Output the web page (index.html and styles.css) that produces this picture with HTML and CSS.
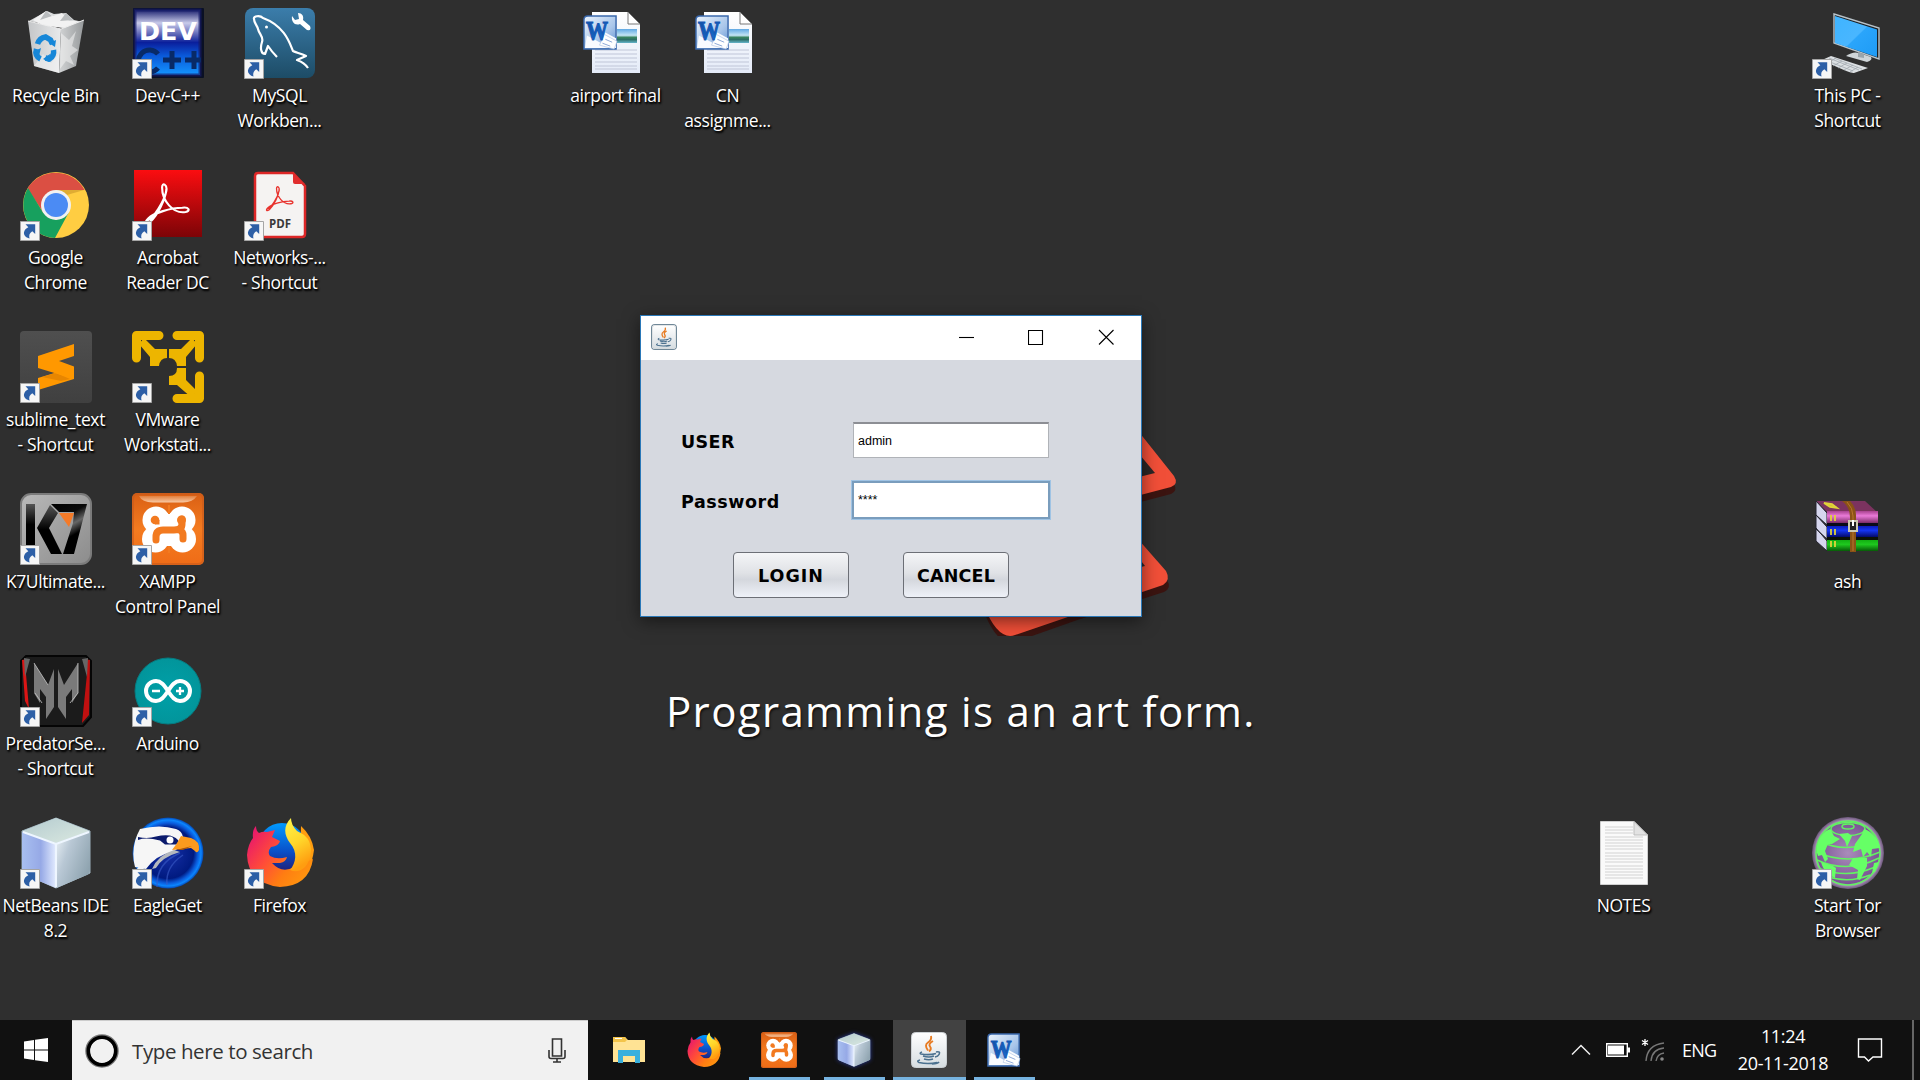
FILE: index.html
```html
<!DOCTYPE html>
<html lang="en">
<head>
<meta charset="utf-8">
<title>Desktop</title>
<link rel="stylesheet" href="styles.css">
</head>
<body>
<svg class="defs" aria-hidden="true">
  <defs>
    <linearGradient id="gDev" x2="0" y2="1"><stop offset="0" stop-color="#1d2270"/><stop offset=".2" stop-color="#c9cbea"/><stop offset=".38" stop-color="#5a62b5"/><stop offset=".5" stop-color="#0a1f9c"/><stop offset=".7" stop-color="#0a58d8"/><stop offset="1" stop-color="#1495ff"/></linearGradient>
    <linearGradient id="gSql" x2="0" y2="1"><stop offset="0" stop-color="#3b7dab"/><stop offset="1" stop-color="#1d4c66"/></linearGradient>
    <linearGradient id="gAcr" x2="0" y2="1"><stop offset="0" stop-color="#fb0d10"/><stop offset="1" stop-color="#7c0407"/></linearGradient>
    <linearGradient id="gSub" x2="0" y2="1"><stop offset="0" stop-color="#4f4f4f"/><stop offset="1" stop-color="#404040"/></linearGradient>
    <linearGradient id="gK7" x2="1" y2="1"><stop offset="0" stop-color="#b9b9b9"/><stop offset=".5" stop-color="#a2a2a2"/><stop offset="1" stop-color="#8c8c8c"/></linearGradient>
    <linearGradient id="gK7b" x2="0" y2="1"><stop offset="0" stop-color="#555"/><stop offset=".5" stop-color="#000"/></linearGradient>
    <linearGradient id="gK7c" x2=".4" y2="1"><stop offset="0" stop-color="#000"/><stop offset=".35" stop-color="#0a0a0a"/><stop offset=".55" stop-color="#666"/><stop offset=".75" stop-color="#000"/></linearGradient>
    <linearGradient id="gXam" x2="0" y2="1"><stop offset="0" stop-color="#d95f14"/><stop offset=".5" stop-color="#f47b20"/><stop offset="1" stop-color="#ef6c17"/></linearGradient>
    <linearGradient id="gGloss" x2="0" y2="1"><stop offset="0" stop-color="#e2803f"/><stop offset="1" stop-color="#f8c9a4"/></linearGradient>
    <radialGradient id="gArd"><stop offset="0" stop-color="#00a0a8"/><stop offset="1" stop-color="#02959b"/></radialGradient>
    <linearGradient id="gCubeL" x2="1" y2="0"><stop offset="0" stop-color="#a8bff0"/><stop offset=".55" stop-color="#96a9e6"/><stop offset="1" stop-color="#e3ecff"/></linearGradient>
    <linearGradient id="gCubeR" x2="1" y2=".6"><stop offset="0" stop-color="#edf4f8"/><stop offset=".4" stop-color="#b9c8d5"/><stop offset="1" stop-color="#8fa4b0"/></linearGradient>
    <linearGradient id="gCubeT" x2="1" y2="1"><stop offset="0" stop-color="#b4cbd0"/><stop offset="1" stop-color="#dbe9e0"/></linearGradient>
    <radialGradient id="gEag"><stop offset="0" stop-color="#1730a8"/><stop offset=".72" stop-color="#001a80"/><stop offset=".84" stop-color="#0a58d8"/><stop offset=".93" stop-color="#0b86ff"/><stop offset="1" stop-color="#0546b0"/></radialGradient>
    <linearGradient id="gFoxL" x1="1" y1=".9" x2="0" y2=".2"><stop offset="0" stop-color="#ff9d0c"/><stop offset=".35" stop-color="#ff7d12"/><stop offset=".65" stop-color="#ff4a3a"/><stop offset="1" stop-color="#e8186c"/></linearGradient>
    <linearGradient id="gFoxY" x2=".3" y2="1"><stop offset="0" stop-color="#fff44a"/><stop offset=".55" stop-color="#ffd52a"/><stop offset="1" stop-color="#ff9d10"/></linearGradient>
    <linearGradient id="gFoxG" x2="0" y2="1"><stop offset="0" stop-color="#009aff"/><stop offset=".6" stop-color="#0a4fc8"/><stop offset="1" stop-color="#20207a"/></linearGradient>
    <linearGradient id="gPage" x2="0" y2="1"><stop offset="0" stop-color="#fff"/><stop offset="1" stop-color="#e4ebf8"/></linearGradient>
    <linearGradient id="gW" x2="1" y2="1"><stop offset="0" stop-color="#eaf3fd"/><stop offset=".6" stop-color="#a9c6ea"/><stop offset="1" stop-color="#5b8dcf"/></linearGradient>
    <linearGradient id="gWl" x2="1" y2="1"><stop offset="0" stop-color="#0f4a9e"/><stop offset="1" stop-color="#1c74d8"/></linearGradient>
    <linearGradient id="gSky" x2="0" y2="1"><stop offset="0" stop-color="#5fa8e4"/><stop offset=".45" stop-color="#c3e4f4"/><stop offset=".6" stop-color="#3a8560"/><stop offset=".75" stop-color="#2c6f66"/><stop offset="1" stop-color="#66b5cc"/></linearGradient>
    <linearGradient id="gScr" x2="1" y2="1"><stop offset="0" stop-color="#3fb4ff"/><stop offset=".5" stop-color="#49b6ff"/><stop offset=".52" stop-color="#2aa5fb"/><stop offset="1" stop-color="#1e9bf5"/></linearGradient>
    <radialGradient id="gTor"><stop offset="0" stop-color="#a98cba"/><stop offset=".85" stop-color="#7c5595"/><stop offset=".9" stop-color="#a990b8"/><stop offset="1" stop-color="#6a5578"/></radialGradient>
    <linearGradient id="gPink" x2="0" y2="1"><stop offset="0" stop-color="#a8428f"/><stop offset=".4" stop-color="#ea7ad8"/><stop offset="1" stop-color="#7b2c68"/></linearGradient>
    <linearGradient id="gBlue" x2="0" y2="1"><stop offset="0" stop-color="#0c1cba"/><stop offset=".4" stop-color="#1535f2"/><stop offset="1" stop-color="#040a6a"/></linearGradient>
    <linearGradient id="gGreen" x2="0" y2="1"><stop offset="0" stop-color="#12b012"/><stop offset=".4" stop-color="#1fc81f"/><stop offset="1" stop-color="#075a07"/></linearGradient>
    <linearGradient id="gJava" x2="0" y2="1"><stop offset="0" stop-color="#fff"/><stop offset="1" stop-color="#d6dde1"/></linearGradient>
    <linearGradient id="gBinL" x2="1" y2="0"><stop offset="0" stop-color="#c4c6c8"/><stop offset="1" stop-color="#e9eaeb"/></linearGradient>
    <linearGradient id="gBinR" x2="1" y2="0"><stop offset="0" stop-color="#d2d4d5"/><stop offset="1" stop-color="#96999b"/></linearGradient>
  </defs>

  <symbol id="arrow" viewBox="0 0 20 20">
    <path d="M.5.5h19v19H.5z" fill="#f6f6f6" stroke="#a5a5a5"/>
    <path d="M5.500 3.200H15.200V13L12.300 10.300C9.500 12 8.700 14.300 9.500 17.600C5.800 16.600 3.500 14.200 4 11.300C4.400 9 6 7.200 8.300 6.200Z" fill="#2d5fa6"/>
  </symbol>

  <symbol id="bin" viewBox="0 0 72 72">
    <path d="M9 14 27 4l7 3 12-1 8 7 9 2-16 7z" fill="#d8dadb"/>
    <path d="m13 13 13-9 7 5 9-3 7 8 9 0-9 7-25-2z" fill="#f2f2f2"/>
    <path d="m26 4-6 9 12-4zM46 6l-6 8 13-1z" fill="#b9bcbe"/>
    <path d="m8 14 33 8-2 44-25-7z" fill="url(#gBinL)"/>
    <path d="m41 22 23-9-8 46-17 7z" fill="url(#gBinR)"/>
    <path d="m14 59 9-12 8 9 8-9v19zM41 26l8 7 7-9-4 15 6 4-8 6 4 9-8-4-6 8z" fill="#f4f4f4" opacity=".55"/>
    <path d="m8 14 33 8 23-9" fill="none" stroke="#eee" stroke-width="1"/>
    <path d="M18 37q2-6 8-7l5 3 2 4M34 43q1 6-4 9l-4-1M21 52q-6-3-4-10" transform="translate(-.5 0)" fill="none" stroke="#1787d8" stroke-width="5.500"/>
    <path d="m29 36 6 4 1-7zM29 55l1-8-7 5zM13 45l8-4-2 8z" fill="#1787d8"/>
  </symbol>

  <symbol id="dev" viewBox="0 0 72 72">
    <rect x="1" y="1" width="71" height="70" rx="1" fill="#0a1024"/>
    <rect x="3" y="3" width="65" height="65" fill="url(#gDev)"/>
    <path d="M3 3h65v65H3z" fill="none" stroke="#161b66" stroke-width="3" opacity=".7"/>
    <path d="M26 47A11 11 0 1 0 26 61M40 44v18M31 53h18M62 44v18M53 53h16" fill="none" stroke="#082a68" stroke-width="5"/>
  </symbol>

  <symbol id="mysql" viewBox="0 0 72 72">
    <rect x="1" y="1" width="70" height="70" rx="8" fill="url(#gSql)"/>
    <path d="M64 61C60 55 56 54 53 53L62 49C57 46 52 46 49 44C46 37 41 19 19 11C16 8 9 9 10 12C10 16 13 18 14 22C15 27 20 30 18 35C16 41 17 47 21 47L24 39C26 42 29 46 33 50" fill="none" stroke="#fff" stroke-width="2.200" stroke-linejoin="round"/>
    <circle cx="22.500" cy="20" r="1.500" fill="#fff"/>
    <path d="m54 6 1 6-4 1-3-4c-1 6 3 10 8 8l7 6q5 1 3-4l-7-6c1-4-1-7-5-7z" fill="#fff"/>
  </symbol>

  <symbol id="chrome" viewBox="0 0 72 72">
    <circle cx="36" cy="36" r="33" fill="#ffcd42"/>
    <path d="M7.400 19.500A33 33 0 0 1 64.600 21H36L23 43z" fill="#db4f43"/>
    <path d="M8 19A33 33 0 0 0 35 69L49 43 36 51 23 43.500z" fill="#17a05e"/>
    <path d="M36 21h28l-17 5z" fill="#c9962a" opacity=".6"/>
    <circle cx="36" cy="36" r="15" fill="#f1f1f1"/><circle cx="36" cy="36" r="12" fill="#4b8bf4"/>
  </symbol>

  <symbol id="acrobatMark" viewBox="0 0 44 44">
    <path d="M2 38C8 36 18 20 20 10c1-6-4-8-4-3 0 12 10 25 22 23 5-1 3-5-3-4C24 26 8 31 3 36c-4 4-2 6 2 3C12 33 19 18 20 9" fill="none" stroke="currentColor" stroke-width="2" stroke-linejoin="round"/>
  </symbol>
  <symbol id="acrobat" viewBox="0 0 72 72">
    <rect x="2" y="1" width="68" height="67" fill="url(#gAcr)"/>
    <svg x="13" y="11" width="47" height="47" color="#fff"><use href="#acrobatMark"/></svg>
  </symbol>
  <symbol id="pdf" viewBox="0 0 72 72">
    <path d="M14 4h35l12 13v48q0 3-3 3H14q-3 0-3-3V7q0-3 3-3z" fill="#f5f3f2" stroke="#dd2727" stroke-width="2.500"/>
    <path d="M49 4v9q0 2 2 2h10z" fill="#e02d2d"/>
    <svg x="21" y="15" width="31" height="29" color="#e8322d"><use href="#acrobatMark"/></svg>
  </symbol>

  <symbol id="sublime" viewBox="0 0 72 72">
    <rect width="72" height="72" rx="4" fill="url(#gSub)"/>
    <path d="m18 47 36-11v12L18 59z" fill="#ff9800"/><path d="m22 46 14-4 14 6-9 2z" fill="#e88600"/>
    <path d="m18 25 36-12v12l-15 5 15 5.500V48L18 37z" fill="#ff9800"/>
  </symbol>

  <symbol id="vmware" viewBox="0 0 72 72">
    <g fill="none" stroke="#edb500" stroke-width="9" stroke-linecap="round" stroke-linejoin="round">
      <path d="M27 4.500H4.500V27M45 4.500h22.500V27M67.500 45v22.500H45"/>
    </g>
    <path d="M12 7 23 18h12v9q-7 0-8 8h-9V26L7 13zM60 7 49 18H37v9q7 0 8 8h9V26L65 13zM65 60 54 49V37h-9q0 8-8 8v9h8l15 13z" fill="#edb500"/>
  </symbol>

  <symbol id="k7" viewBox="0 0 72 72">
    <rect x="1" y="1" width="70" height="70" rx="10" fill="url(#gK7)" stroke="#7b7b7b" stroke-width="2"/>
    <path d="M6 11h9v41H6z" fill="url(#gK7b)"/>
    <path d="m17 35 13-23 8 8-9 15 13 26H31z" fill="url(#gK7b)"/>
    <path d="M31 11h36L54 61H43l10-31 1-11H39z" fill="url(#gK7c)"/>
    <path d="M39 20h15l-5 14z" fill="#f47a28"/>
  </symbol>

  <symbol id="xampp" viewBox="0 0 72 72">
    <rect width="72" height="72" rx="5" fill="url(#gXam)"/>
    <rect x="1" y="1" width="70" height="70" rx="5" fill="none" stroke="#c65a1c" stroke-width="2" opacity=".6"/>
    <path d="M7 3h58q-4 6-14 6.500H21Q10 9 7 3z" fill="url(#gGloss)"/>
    <g fill="#fff"><circle cx="24" cy="27" r="13.500"/><circle cx="50" cy="27" r="13.500"/><circle cx="23.500" cy="46" r="13.500"/><circle cx="50.500" cy="46" r="13.500"/><path d="M24 20h26v33H24z"/></g>
    <path d="M37 12v9M37 53v7" stroke="#f27a20" stroke-width="2"/>
    <path d="M24 47v-3q0-7 7-7h11q8 0 8-6v-5M51 46v-4q0-3-3-5" fill="none" stroke="#f27a20" stroke-width="7" stroke-linecap="round"/>
    <circle cx="49.500" cy="27" r="4.500" fill="#f27a20"/>
    <circle cx="23" cy="27" r="4.300" fill="#f27a20"/><path d="M23 27h4.500v4.500H23z" fill="#f27a20"/>
  </symbol>

  <symbol id="predator" viewBox="0 0 72 72">
    <path d="M6 1h60l5 5v56l-8 9H6l-5-5V6z" fill="#1b1b1b" stroke="#050505" stroke-width="2"/>
    <path d="M2 5 8 4l-2 15 3 35-4-8z" fill="#db1515"/><path d="m70 5-6-1 3 15-5 49 7-8z" fill="#c01010"/>
    <path d="m4 3 6 1-5 18zM68 3l-6 1 5 18z" fill="#666"/>
    <path d="M14 8 28 30 34 14V52L26 64V42L20 34V48L14 38zM58 8 44 30 38 14V52L46 64V42L52 34V48L58 38z" fill="#7a7a7a"/>
    <path d="m14 8 14 22M58 8v30l-8 10M15 38l7 10" fill="none" stroke="#c8c8c8" stroke-width=".8"/>
  </symbol>

  <symbol id="arduino" viewBox="0 0 72 72">
    <circle cx="36" cy="36" r="33" fill="url(#gArd)" stroke="#067c81"/>
    <path d="M36 36c-4-6-7-10-12-10a10 10 0 0 0 0 20c5 0 8-4 12-10s7-10 12-10a10 10 0 0 1 0 20c-5 0-8-4-12-10z" fill="none" stroke="#fff" stroke-width="4"/>
    <path d="M20 36h8M44 36h8M48 32v8" stroke="#fff" stroke-width="2.300"/>
  </symbol>

  <symbol id="netbeans" viewBox="0 0 72 72">
    <path d="M36 1 70 14v42L36 71 2 56V14z" fill="#c4d5df" stroke="#9eb2bd" stroke-linejoin="round"/>
    <path d="m2 15 34 12v44L5 58q-3-1-3-5z" fill="url(#gCubeL)"/>
    <path d="m36 27 34-12v38q0 4-3 5L36 71z" fill="url(#gCubeR)"/>
    <path d="M36 1 69 14 36 26 3 14z" fill="url(#gCubeT)"/>
    <path d="m3 15 33 12 33-12M36 27v43" fill="none" stroke="#eef6ff" stroke-width="2"/>
  </symbol>

  <symbol id="eagle" viewBox="0 0 72 72">
    <circle cx="36" cy="36" r="35.500" fill="url(#gEag)"/>
    <path d="M25 70Q24 46 48 36M35 68q-2-18 16-30" fill="none" stroke="#3a5cc8" stroke-width="1.500" opacity=".6"/>
    <path d="M8 12Q28 7 44 12q6 2 7 8v9L40 35Q24 38 14 52L3 50Q-2 30 8 12z" fill="#f6f6f6"/>
    <path d="M42 33Q26 38 20 52l4-1Q30 40 48 35z" fill="#b4b8be"/>
    <path d="m12 44-3 6 6 3-2 6-9-6z" fill="#f6f6f6"/>
    <path d="M6 20q10 2 18-.500 8-2 14-1 7 2 9 6l-3 3H33l-5-4Q14 20 6 23z" fill="#0a1a6c"/>
    <circle cx="38" cy="23" r="3.500" fill="#fff"/>
    <path d="m49 19 10 2q9 3 8 12-2 4-4 1l-4-3-19 2q5-6 9-14z" fill="#fb9a1e"/><path d="m44 33 16-4-9 4z" fill="#a85408"/>
  </symbol>

  <symbol id="firefox" viewBox="0 0 72 72">
    <circle cx="38" cy="30" r="24" fill="url(#gFoxG)"/>
    <path d="M57 9q11 10 13 24-3 22-14 28z" fill="#ff9d10"/>
    <path d="M12 9Q12 14 15 16Q19 14 23 15L31 13L28 20L36 24Q35 29 27 30Q23 35 26 39Q33 43 43 40Q42 45 36 46L28 46Q38 57 50 50L69 42Q65 69 36 70Q4 66 3 38Q4 27 9 21Q8 13 12 9z" fill="url(#gFoxL)"/>
    <path d="M47 1C39 9 40 18 46 26C54 35 52 46 46 53C58 58 67 47 67 32C66 20 59 17 53 14Q47 8 47 1z" fill="url(#gFoxY)"/>
  </symbol>

  <symbol id="wordMark" viewBox="0 0 36 36">
    <path d="M5 1h29v34H1V5q0-4 4-4z" fill="url(#gW)" stroke="#3a68ac" stroke-width="1.500"/>
    <path d="M4 21 19 29 23 18l11 6v10H2z" fill="#f9fbff"/>
    <path d="m22 20 13 7-3 8-15-4z" fill="#fff" stroke="#b2c5e4" stroke-width=".7"/>
    <path d="m23 25 7 3m-10 1 8 3" stroke="#8aa6d6"/>
  </symbol>
  <symbol id="doc" viewBox="0 0 72 72">
    <path d="M12 5h36l12 12v49H12z" fill="url(#gPage)"/>
    <path d="M48 5v12h12z" fill="#fff" stroke="#777" stroke-width="1"/>
    <rect x="37" y="22" width="20" height="14" fill="url(#gSky)"/>
    <path d="M15 43h42M15 47h42M15 51h42M15 55h42M15 59h42M15 62h42" stroke="#bfc6d8" stroke-width="1.200"/>
    <svg x="3" y="8" width="35" height="35"><use href="#wordMark"/></svg>
  </symbol>

  <symbol id="pc" viewBox="0 0 72 72">
    <path d="M22 7 67 21v31L22 36z" fill="#1a1f24" stroke="#b8c2c8" stroke-width="1.400"/>
    <path d="m23 9 42 13.500V50L23 36z" fill="url(#gScr)"/>
    <path d="M34 49q7-5 13-3l12 4q2 3-4 5z" fill="#cfd5d8"/><path d="m46 45 6 2v4l-6-1z" fill="#9ba5ab"/>
    <path d="m10 53 9-4 37 12-14 5q-3 1-32-13z" fill="#dce0e3"/>
    <path d="m13 53 28 11M17 51l30 12M22 51l28 11M16 56l8-5m-3 8 9-5m-4 7 9-5m-3 7 9-5m-3 7 8-5" stroke="#a2aab0" stroke-width=".8"/>
  </symbol>

  <symbol id="rar" viewBox="0 0 72 72">
    <path d="M4 8h49l13 12H16z" fill="#7b335f"/>
    <path d="M4 8 15 20v12L4 22zM4 22l11 12v12L4 36zM4 35l11 13v10L4 48z" fill="#d6d6ee" stroke="#252530"/>
    <rect x="15" y="18" width="51" height="12" fill="url(#gPink)"/><path d="M15 30h51v3H15z" fill="#0a0a18"/>
    <rect x="15" y="33" width="51" height="11" fill="url(#gBlue)"/><path d="M15 44h51v3H15z" fill="#0a1205"/>
    <rect x="15" y="47" width="51" height="11" fill="url(#gGreen)"/>
    <path d="m12 10 8 1 5 4-7-1zM19 22v6m4-6v6m-4 8v6m4-6v6m-4 6v6m4-6v6" stroke="#e0d23a" stroke-width="1.800" fill="#d6c62e"/>
    <path d="M30 8h8q6 6 6 14v37h-6V24q0-10-8-16z" fill="#8a5216"/><path d="M35 9q6 6 6 14v35" fill="none" stroke="#b8762a"/>
    <rect x="37" y="28" width="8" height="10" fill="#222" stroke="#ccc8b0" stroke-width="2"/><path d="M41 27v6" stroke="#fff" stroke-width="2"/>
  </symbol>

  <symbol id="notes" viewBox="0 0 72 72">
    <path d="M12.500 4.500H46L59.500 18v49.500h-47z" fill="#fafafa" stroke="#cfcfcf"/>
    <path d="M46 4.500V18h13.500z" fill="#e2e2e2" stroke="#bdbdbd"/>
    <path d="M17 10h28M17 13h28M17 16h28M17 20h38M17 23h38M17 26h38M17 29h38M17 32h38M17 36h38M17 39h38M17 42h38M17 45h38M17 49h38M17 52h38M17 55h38M17 58h38M17 61h38" stroke="#d2d2d2"/>
  </symbol>

  <symbol id="tor" viewBox="0 0 72 72">
    <circle cx="36" cy="36" r="36" fill="url(#gTor)"/>
    <g fill="none" stroke="#62f262" stroke-width="1.500"><circle cx="36" cy="36" r="32"/><ellipse cx="36" cy="12" rx="17" ry="6.500"/><ellipse cx="36" cy="9.500" rx="6" ry="2.500"/><path d="M7 24q29 14 58-2M4 35q32 14 64 0M5 43q30 14 62-2M9 52q27 10 54-2M14 59q22 8 44-1"/></g>
    <g fill="#66ff66"><path d="m18 12-4 2C6 21 3 30 6 39l4-1 3 7 3-3-3-8 3-7 4 0 8-5-6-3-3-6z"/><path d="m27 17 9-1 4 3-5 11-2-6z"/><path d="m52 12-2 5-7 10-2 8 8-3 2 8 4-5 4 5 1-8 8-1c-1-8-7-16-16-19z"/><path d="m41 41 14 0 0 8-7 14-3-1 1-9-9-5z"/><path d="m9 45 12 4 3 2-1 10c-7-3-12-8-14-16zM62 46l5-1-4 10-3 1z"/></g>
  </symbol>

  <symbol id="java" viewBox="0 0 36 36">
    <rect x=".5" y=".5" width="35" height="35" rx="4" fill="url(#gJava)" stroke="#ccd1d4"/>
    <path d="M20 4q1 4-3 6.500t0 8M22 9q-5 3-3 5.500t-1 5" fill="none" stroke="#e77b22" stroke-width="1.900"/>
    <path d="M11 20q-3 1-1 2 8 1.500 15-.5M12 24q6 2 11 0M13 27q5 1.500 9 0M25 20q5-1 3 2.500-1 2-4 2.500M9 28q-4 1-1 2.500 9 2 18 0M28 30q-1 1.500-7 2" fill="none" stroke="#4b718f" stroke-width="1.600"/>
  </symbol>
</svg>

<div class="screen">
  <main class="desktop">
    <svg class="wallpaper-mark" viewBox="0 0 260 230" width="260" height="230">
      <g fill="#3b1410" transform="translate(0 3)"><path d="M172 15Q180 17 185 24L224 75Q228 82 221 85L160 101 100 80z"/><path d="M160 110 180 127 217 171Q222 179 214 183L130 210 90 160z"/><path d="M34 203Q48 238 65 233L150 203z"/></g>
      <g fill="#f14f38"><path d="M172 12Q180 14 185 21L224 70Q229 78 221 81L160 97 100 77z"/><path d="M160 107 180 124 216 165Q221 174 213 179L130 207 90 157z"/><path d="M34 200Q48 235 65 229L150 200z"/></g>
      <path d="m180 37 25 30-32 8z" fill="#2c2626"/><path d="m185 147 10 13-12 3z" fill="#2c2626"/>
    </svg>
    <p class="motto">Programming is an art form.</p>

    <div class="icons">
      <figure class="item c1 r1"><div class="pic"><svg><use href="#bin"/></svg></div><figcaption>Recycle Bin</figcaption></figure>
      <figure class="item c2 r1"><div class="pic"><svg viewBox="0 0 72 72"><use href="#dev"/><text x="7" y="33" class="t-dev" textLength="58" lengthAdjust="spacingAndGlyphs">DEV</text></svg><svg class="link"><use href="#arrow"/></svg></div><figcaption>Dev-C++</figcaption></figure>
      <figure class="item c3 r1"><div class="pic"><svg><use href="#mysql"/></svg><svg class="link"><use href="#arrow"/></svg></div><figcaption>MySQL<br>Workben...</figcaption></figure>
      <figure class="item c6 r1"><div class="pic"><svg viewBox="0 0 72 72"><use href="#doc"/><text x="6" y="33" class="t-word" textLength="22" lengthAdjust="spacingAndGlyphs">W</text></svg></div><figcaption>airport final</figcaption></figure>
      <figure class="item c7 r1"><div class="pic"><svg viewBox="0 0 72 72"><use href="#doc"/><text x="6" y="33" class="t-word" textLength="22" lengthAdjust="spacingAndGlyphs">W</text></svg></div><figcaption>CN<br>assignme...</figcaption></figure>
      <figure class="item c17 r1"><div class="pic"><svg><use href="#pc"/></svg><svg class="link"><use href="#arrow"/></svg></div><figcaption>This PC -<br>Shortcut</figcaption></figure>

      <figure class="item c1 r2"><div class="pic"><svg><use href="#chrome"/></svg><svg class="link"><use href="#arrow"/></svg></div><figcaption>Google<br>Chrome</figcaption></figure>
      <figure class="item c2 r2"><div class="pic"><svg><use href="#acrobat"/></svg><svg class="link"><use href="#arrow"/></svg></div><figcaption>Acrobat<br>Reader DC</figcaption></figure>
      <figure class="item c3 r2"><div class="pic"><svg viewBox="0 0 72 72"><use href="#pdf"/><text x="25" y="59" class="t-pdf" textLength="22" lengthAdjust="spacingAndGlyphs">PDF</text></svg><svg class="link"><use href="#arrow"/></svg></div><figcaption>Networks-...<br>- Shortcut</figcaption></figure>

      <figure class="item c1 r3"><div class="pic"><svg><use href="#sublime"/></svg><svg class="link"><use href="#arrow"/></svg></div><figcaption>sublime_text<br>- Shortcut</figcaption></figure>
      <figure class="item c2 r3"><div class="pic"><svg><use href="#vmware"/></svg><svg class="link"><use href="#arrow"/></svg></div><figcaption>VMware<br>Workstati...</figcaption></figure>

      <figure class="item c1 r4"><div class="pic"><svg><use href="#k7"/></svg><svg class="link"><use href="#arrow"/></svg></div><figcaption>K7Ultimate...</figcaption></figure>
      <figure class="item c2 r4"><div class="pic"><svg><use href="#xampp"/></svg><svg class="link"><use href="#arrow"/></svg></div><figcaption>XAMPP<br>Control Panel</figcaption></figure>
      <figure class="item c17 r4"><div class="pic"><svg><use href="#rar"/></svg></div><figcaption>ash</figcaption></figure>

      <figure class="item c1 r5"><div class="pic"><svg><use href="#predator"/></svg><svg class="link"><use href="#arrow"/></svg></div><figcaption>PredatorSe...<br>- Shortcut</figcaption></figure>
      <figure class="item c2 r5"><div class="pic"><svg><use href="#arduino"/></svg><svg class="link"><use href="#arrow"/></svg></div><figcaption>Arduino</figcaption></figure>

      <figure class="item c1 r6"><div class="pic"><svg><use href="#netbeans"/></svg><svg class="link"><use href="#arrow"/></svg></div><figcaption>NetBeans IDE<br>8.2</figcaption></figure>
      <figure class="item c2 r6"><div class="pic"><svg><use href="#eagle"/></svg><svg class="link"><use href="#arrow"/></svg></div><figcaption>EagleGet</figcaption></figure>
      <figure class="item c3 r6"><div class="pic"><svg><use href="#firefox"/></svg><svg class="link"><use href="#arrow"/></svg></div><figcaption>Firefox</figcaption></figure>
      <figure class="item c15 r6"><div class="pic"><svg><use href="#notes"/></svg></div><figcaption>NOTES</figcaption></figure>
      <figure class="item c17 r6"><div class="pic"><svg><use href="#tor"/></svg><svg class="link"><use href="#arrow"/></svg></div><figcaption>Start Tor<br>Browser</figcaption></figure>
    </div>

    <section class="window">
      <header class="titlebar">
        <svg class="app"><use href="#java"/></svg>
        <div class="controls">
          <svg class="ctl" viewBox="0 0 16 16"><path d="M1 8.500h15"/></svg>
          <svg class="ctl" viewBox="0 0 16 16"><path d="M.5 1.500h14v14H.5z"/></svg>
          <svg class="ctl" viewBox="0 0 16 16"><path d="m1 1 14.500 14.500M15.500 1 1 15.500"/></svg>
        </div>
      </header>
      <form class="form">
        <div class="row"><label>USER</label><div class="field">admin</div></div>
        <div class="row"><label class="pw">Password</label><div class="field focus">****</div></div>
        <div class="buttons"><button type="button" class="login">LOGIN</button><button type="button" class="cancel">CANCEL</button></div>
      </form>
    </section>
  </main>

  <footer class="taskbar">
    <div class="start"><svg width="24" height="24" viewBox="0 0 24 24"><path fill="#fff" d="M0 3.500 10 2v9.500H0zM11 1.800 24 0v11.500H11zM0 12.500h10V22L0 20.500zM11 12.500h13V24l-13-1.800z"/></svg></div>
    <div class="search">
      <svg class="ring" width="34" height="34" viewBox="0 0 34 34"><circle cx="17" cy="17" r="14.500" fill="none" stroke="#777" stroke-width="4.500"/><circle cx="17" cy="17" r="13.700" fill="none" stroke="#000" stroke-width="3.600"/></svg>
      <span class="hint">Type here to search</span>
      <svg class="mic" width="18" height="25" viewBox="0 0 18 25"><path d="M4.500 1h9v17h-9zM1 12v6.500q0 2 2 2h12q2 0 2-2V12M9 20.500V24M5 24h8" fill="none" stroke="#333" stroke-width="1.600"/></svg>
    </div>
    <nav class="apps">
      <div class="task"><svg viewBox="0 0 36 36"><path d="M2 5h12l3 3h17v22H2z" fill="#ffe394"/><path d="M2 5h12l2 3-2 2H2z" fill="#f3c44a"/><path d="M4 6.500h7" stroke="#fff"/><path d="M7 18h22v13h-5v-7H12v7H7z" fill="#3ab0dd"/></svg></div>
      <div class="task"><svg><use href="#firefox"/></svg></div>
      <div class="task open"><svg><use href="#xampp"/></svg></div>
      <div class="task open"><svg class="glow"><use href="#netbeans"/></svg></div>
      <div class="task active"><svg><use href="#java"/></svg></div>
      <div class="task open"><svg class="word" viewBox="0 0 36 36"><use href="#wordMark"/><text x="4" y="26" class="t-word" textLength="22" lengthAdjust="spacingAndGlyphs">W</text></svg></div>
    </nav>
    <div class="tray">
      <svg class="caret" width="20" height="12" viewBox="0 0 20 12"><path d="m1 10.500 9-9 9 9" fill="none" stroke="#eee" stroke-width="1.500"/></svg>
      <svg class="battery" width="24" height="14" viewBox="0 0 24 14"><path d="M.7.700h20.600v12.600H.700z" fill="none" stroke="#fff" stroke-width="1.400"/><path d="M2 2.500h16v9H2zM22 4.500h2v5h-2z" fill="#fff"/></svg>
      <svg class="wifi" width="24" height="24" viewBox="0 0 24 24"><g fill="none" stroke="#777" stroke-width="1.400"><path d="M5 23Q6 7 23 5M10 23q1-12 13-13M15 23q1-7 8-8"/></g><circle cx="21" cy="21" r="1.800" fill="#888"/><path d="M4 1v7M1 2.500l6 4M7 2.500l-6 4" stroke="#fff" stroke-width="1.300"/></svg>
      <span class="lang">ENG</span>
      <div class="clock"><span>11:24</span><span>20-11-2018</span></div>
      <svg class="notify" width="26" height="25" viewBox="0 0 26 25"><path d="M1.500 1h23v18H16l-4.500 4-4-4h-6z" fill="none" stroke="#fff" stroke-width="1.400"/></svg>
      <i class="peek"></i>
    </div>
  </footer>
</div>
</body>
</html>
```
FILE: styles.css
```css
* { box-sizing: border-box; }
body { margin: 0; background: #2f2f2f; font-family: "Open Sans", "Noto Sans", sans-serif; }
.defs { position: absolute; width: 0; height: 0; }
.screen { width: 1920px; height: 1080px; overflow: hidden; display: flex; flex-direction: column; }
.desktop { position: relative; flex: 1; background: #2f2f2f; }

.t-dev { font: bold 25px "DejaVu Sans", sans-serif; fill: #fff; }
.t-pdf { font: bold 13px "Open Sans", sans-serif; fill: #3a3a3a; }
.t-word { font: bold 27px "Liberation Serif", serif; fill: url(#gWl); stroke: #1458b4; stroke-width: 1.200px; }

/* wallpaper */
.wallpaper-mark { position: absolute; left: 950px; top: 406px; }
.motto { position: absolute; left: 0; width: 1920px; top: 682px; margin: 0; padding-left: 666px; font-size: 42px; line-height: 58px; letter-spacing: 1.350px; color: #fff; white-space: nowrap; text-shadow: 1px 2px 2px #111; }

/* desktop icon grid */
.icons { display: grid; grid-template-columns: repeat(17, 112px); grid-template-rows: repeat(6, 162px); padding-top: 7px; }
.item { margin: 0; display: flex; flex-direction: column; align-items: center; }
.pic { position: relative; width: 72px; height: 72px; }
.pic svg { display: block; width: 72px; height: 72px; }
.pic .link { position: absolute; left: 0; bottom: 0; width: 20px; height: 20px; }
figcaption { margin: 4px 1px 0 0; font-size: 17.500px; line-height: 25px; letter-spacing: -.4px; color: #fff; text-align: center; white-space: nowrap; text-shadow: 1px 1px 2px #000, 1px 2px 2px #000; }
.c1 { grid-column: 1; } .c2 { grid-column: 2; } .c3 { grid-column: 3; } .c6 { grid-column: 6; }
.c7 { grid-column: 7; } .c15 { grid-column: 15; } .c17 { grid-column: 17; }
.r1 { grid-row: 1; } .r2 { grid-row: 2; } .r3 { grid-row: 3; } .r4 { grid-row: 4; } .r5 { grid-row: 5; } .r6 { grid-row: 6; }

/* login window */
.window { position: absolute; left: 640px; top: 315px; width: 502px; height: 302px; border: 1px solid #2a78b8; background: #d6d9e0; box-shadow: 0 4px 16px rgba(0,0,0,.5); font-family: "DejaVu Sans", sans-serif; }
.titlebar { height: 44px; background: #fff; display: flex; justify-content: space-between; align-items: center; padding: 0 27px 2px 11px; }
.app { width: 24px; height: 24px; border-radius: 3px; box-shadow: 0 0 0 1px #6f8797; }
.controls { display: flex; gap: 54px; }
.ctl { width: 16px; height: 16px; fill: none; stroke: #000; stroke-width: 1.100px; }
.form { padding-top: 60px; color: #000; }
.row { display: flex; align-items: center; height: 40px; margin-bottom: 20px; padding-left: 40px; }
.row label { width: 172px; padding-top: 3px; font-size: 17.500px; font-weight: bold; letter-spacing: .4px; }
.field { width: 196px; height: 36px; display: flex; align-items: center; padding-left: 4px; background: #fff; border: 1px solid #b0b3b8; border-top: 2px solid #8c8e94; font: 12.500px "Liberation Sans", sans-serif; }
.row .pw { width: 171px; letter-spacing: .55px; }
.focus { width: 198px; height: 38px; border: 2px solid #7a9dbd; box-shadow: 0 0 0 1px #9fc3e4; }
.buttons { display: flex; gap: 54px; padding-left: 92px; margin-top: 12px; }
.row + .buttons { padding-top: 12px; }
button { height: 46px; padding: 2px 0 0; border: 1px solid #6c6f76; border-radius: 4px; background: linear-gradient(#f4f5f7, #e0e2e6 45%, #d4d7dd 60%, #eef1f8); font: bold 17.500px "DejaVu Sans", sans-serif; color: #000; }
.login { width: 116px; letter-spacing: 1px; }
.cancel { width: 106px; letter-spacing: .2px; }

/* taskbar */
.taskbar { height: 60px; background: #111; display: flex; color: #fff; }
.start { width: 72px; display: grid; place-items: center; }
.search { width: 516px; background: #f1f1f1; border-top: 1px solid #ccc; display: flex; align-items: center; padding: 0 22px 0 13px; color: #333; }
.hint { margin-left: 13px; flex: 1; font-size: 20.500px; letter-spacing: -.4px; white-space: nowrap; }
.apps { display: flex; gap: 2px; padding-left: 5px; }
.task { width: 73px; display: grid; place-items: center; padding-right: 2px; position: relative; }
.task svg { width: 36px; height: 36px; }
.task .glow { width: 34px; height: 34px; filter: drop-shadow(0 0 2px #2a3a9a); }
.task .word { width: 34px; height: 34px; }
.open::after, .active::after { content: ""; position: absolute; bottom: 0; left: 6px; right: 6px; height: 3px; background: #76b3e0; }
.active { background: #424242; }
.active::after { left: 0; right: 0; }
.tray { margin-left: auto; display: flex; align-items: center; font-size: 18px; letter-spacing: -.35px; }
.battery { margin-left: 15px; }
.wifi { margin-left: 11px; }
.lang { margin-left: 17px; width: 34px; letter-spacing: -.8px; }
.clock { width: 100px; margin-left: 17px; display: flex; flex-direction: column; align-items: center; line-height: 27px; }
.notify { margin-left: 24px; }
.peek { width: 2px; height: 60px; background: #666; margin: 0 6px 0 29px; }
```
